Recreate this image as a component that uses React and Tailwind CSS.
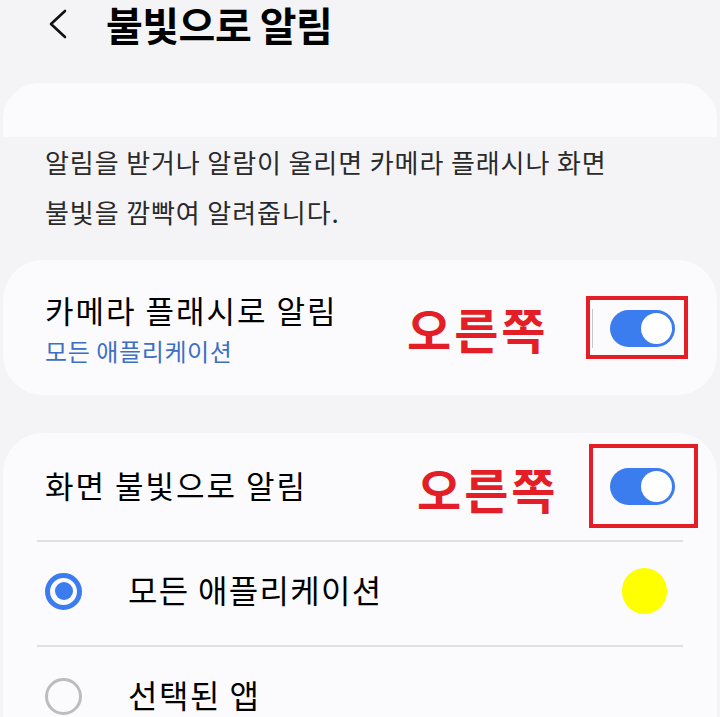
const FONT = { fontFamily: '"Noto Sans CJK KR", "Noto Sans", sans-serif' };

const Toggle = () => (
    <div className="w-[65px] h-[37px] rounded-full bg-[#3b7cee] flex items-center justify-end pr-[3px]">
        <div className="w-[31px] h-[31px] rounded-full bg-white" />
    </div>
)

const Note = ({ className }) => (
    <div className={`absolute text-[48px] leading-none font-bold text-[#e41e26] tracking-[3px] ${className}`}>오른쪽</div>
)

const App = () => {
    return (
        <div className="w-[720px] h-[717px] overflow-hidden bg-[#f4f4f6]" style={FONT}>
            <div className="h-[48px] flex items-center pl-[46px]">
                <svg width="24" height="32" viewBox="0 0 24 32" fill="none">
                    <path d="M19 3 L5 16 L19 29" stroke="#111" strokeWidth="2.6" strokeLinecap="round" strokeLinejoin="round" />
                </svg>
                <div className="ml-[36px] text-[40px] font-bold text-black tracking-[-0.5px] leading-none">불빛으로 알림</div>
            </div>

            <div className="mt-[35px] mx-[3px] h-[54px] bg-[#fbfbfd] rounded-t-[36px]" />

            <div className="px-[45px] text-[26px] leading-[50px] text-[#2a2a2a] tracking-[0.9px]">
                <div>알림을 받거나 알람이 울리면 카메라 플래시나 화면</div>
                <div>불빛을 깜빡여 알려줍니다.</div>
            </div>

            <div className="relative mt-[23px] mx-[3px] bg-[#fbfbfd] rounded-[40px] pl-[42px] pr-[42px] pt-[30px] pb-[29px] flex items-center">
                <div className="flex-1">
                    <div className="text-[31px] leading-[40px] text-black tracking-[2px]">카메라 플래시로 알림</div>
                    <div className="text-[24px] leading-[30px] mt-[6px] text-[#3d6fc5] tracking-[0.6px]">모든 애플리케이션</div>
                </div>
                <div className="w-px h-[39px] bg-[#c8c8c8] mr-[17px]" />
                <Toggle />
                <Note className="left-[404px] top-[44px]" />
                <div className="absolute left-[583px] top-[36px] w-[102px] h-[63px] border-[4px] border-[#e41e26]" />
            </div>

            <div className="relative mt-[38px] mx-[3px] bg-[#fbfbfd] rounded-t-[40px] h-[320px]">
                <div className="h-[107px] flex items-center pl-[42px] pr-[42px]">
                    <div className="flex-1 text-[31px] text-black tracking-[2px] pb-[3px]">화면 불빛으로 알림</div>
                    <Toggle />
                </div>
                <div className="mx-[34px] h-[2px] bg-[#e0e0e2]" />
                <div className="h-[103px] flex items-center pl-[42px] pr-[50px] pb-[5px]">
                    <div className="w-[37px] h-[37px] rounded-full border-[5px] border-[#3b7cee] flex items-center justify-center">
                        <div className="w-[18px] h-[18px] rounded-full bg-[#3b7cee]" />
                    </div>
                    <div className="flex-1 ml-[46px] text-[32px] text-black tracking-[1.3px] pb-[5px]">모든 애플리케이션</div>
                    <div className="w-[45px] h-[46px] rounded-full bg-[#ffff00]" />
                </div>
                <div className="mx-[34px] h-[2px] bg-[#e0e0e2]" />
                <div className="h-[104px] flex items-center pl-[42px] pb-[6px]">
                    <div className="w-[37px] h-[37px] rounded-full border-[3px] border-[#bdbdbd]" />
                    <div className="ml-[46px] text-[32px] text-black tracking-[1.5px] pb-[5px]">선택된 앱</div>
                </div>
                <Note className="left-[414px] top-[31px]" />
                <div className="absolute left-[586px] top-[11px] w-[109px] h-[84px] border-[4px] border-[#e41e26]" />
            </div>
        </div>
    )
}

export default App;
